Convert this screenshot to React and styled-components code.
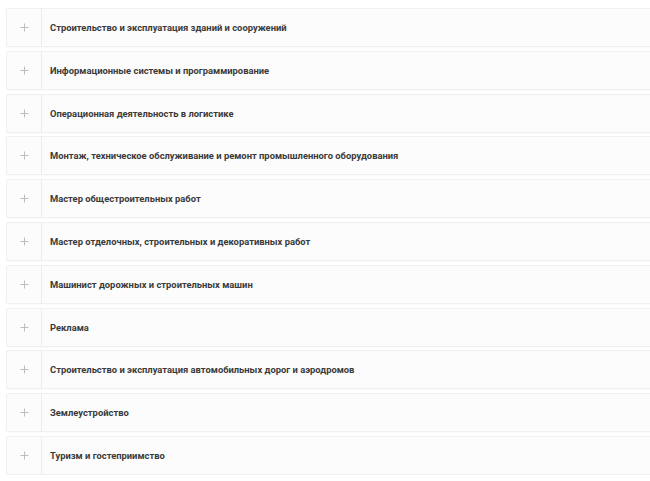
import React from "react";
import styled, { createGlobalStyle } from "styled-components";

const GlobalStyle = createGlobalStyle`
  body {
    margin: 0;
    background: #ffffff;
    font-family: Roboto, "Noto Sans", sans-serif;
  }
`;

const items = [
  "Строительство и эксплуатация зданий и сооружений",
  "Информационные системы и программирование",
  "Операционная деятельность в логистике",
  "Монтаж, техническое обслуживание и ремонт промышленного оборудования",
  "Мастер общестроительных работ",
  "Мастер отделочных, строительных и декоративных работ",
  "Машинист дорожных и строительных машин",
  "Реклама",
  "Строительство и эксплуатация автомобильных дорог и аэродромов",
  "Землеустройство",
  "Туризм и гостеприимство",
];

const List = styled.div`
  display: flex;
  flex-direction: column;
  gap: 3.8px;
  padding: 8px 0 0 6px;
  width: 650px;
  box-sizing: border-box;
`;

const Card = styled.div`
  display: flex;
  align-items: stretch;
  height: 39px;
  box-sizing: border-box;
  background: #fcfcfc;
  border: 1px solid #f0f0f0;
  border-right: none;
  border-radius: 3px 0 0 3px;
  box-shadow: 0 1px 1px rgba(0, 0, 0, 0.02);
`;

const Toggle = styled.div`
  width: 34px;
  flex-shrink: 0;
  display: flex;
  align-items: center;
  justify-content: center;
  border-right: 1px solid #ececec;
`;

const Title = styled.div`
  display: flex;
  align-items: center;
  padding-left: 8px;
  font-size: 9.4px;
  font-weight: 700;
  color: #3a3a3a;
  white-space: nowrap;
`;

const Plus = () => (
  <svg width="9" height="9" viewBox="0 0 9 9">
    <path d="M4.5 0.5v8M0.5 4.5h8" stroke="#bdbdbd" strokeWidth="1" fill="none" />
  </svg>
);

export default function App() {
  return (
    <>
      <GlobalStyle />
      <List>
        {items.map((t) => (
          <Card key={t}>
            <Toggle>
              <Plus />
            </Toggle>
            <Title>{t}</Title>
          </Card>
        ))}
      </List>
    </>
  );
}
